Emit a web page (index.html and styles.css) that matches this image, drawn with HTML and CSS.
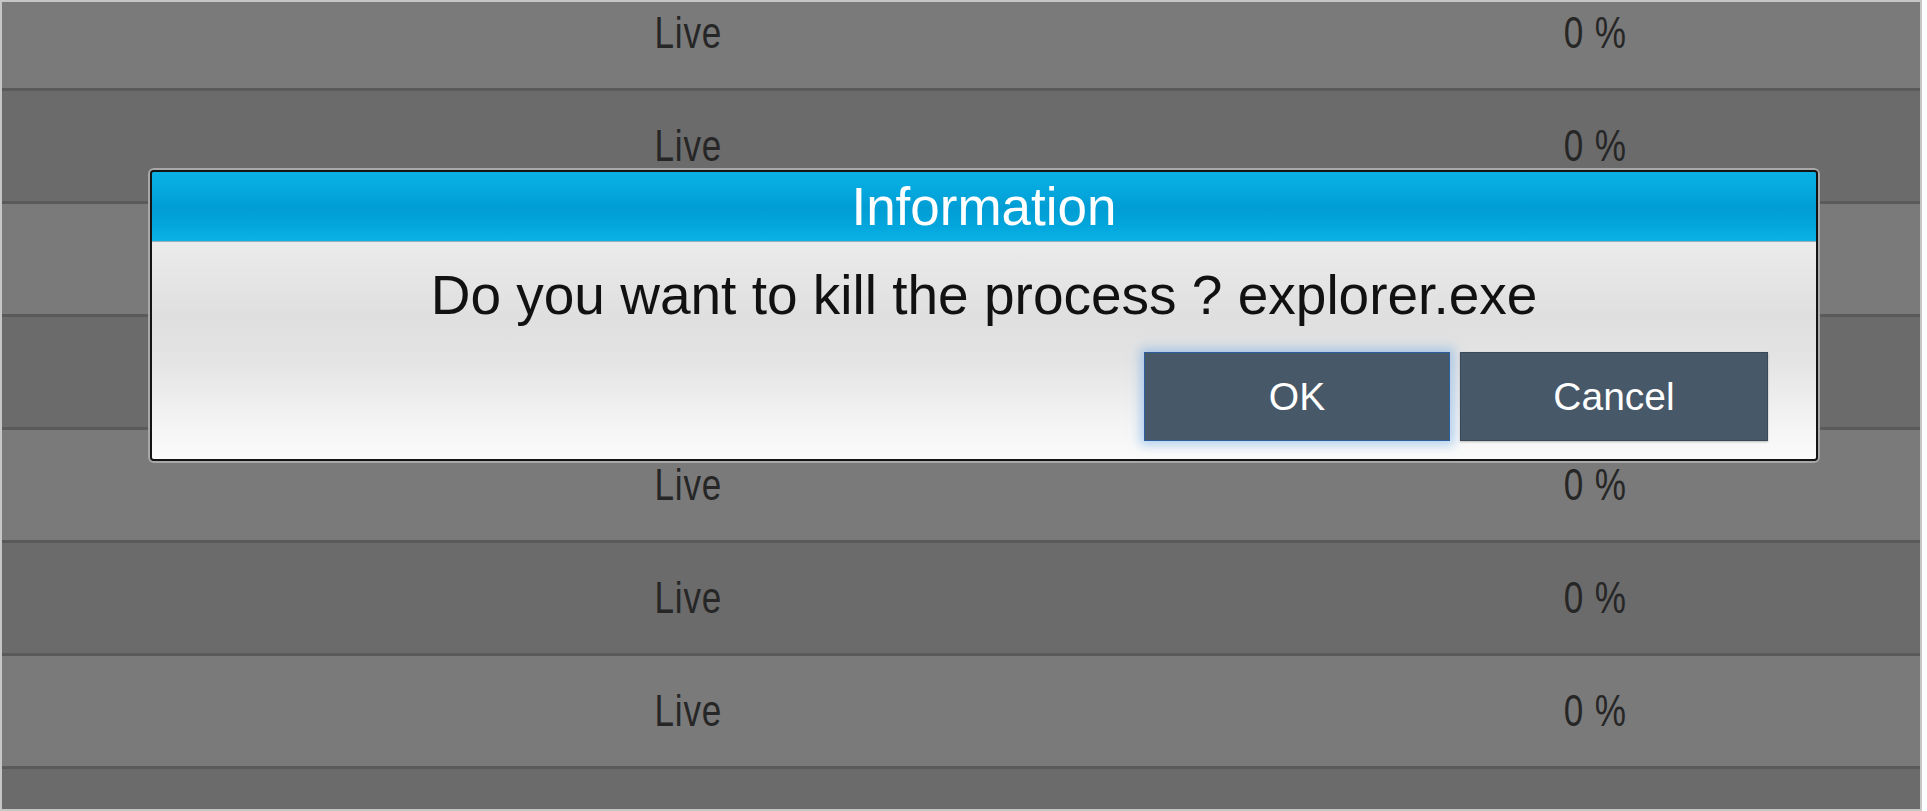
FILE: index.html
```html
<!DOCTYPE html>
<html>
<head>
<meta charset="UTF-8">
<title>Processes</title>
<link rel="stylesheet" href="styles.css">
</head>
<body>
   <div class="process-table">
      <div class="rows">
         <div class="row"><div></div><div class="cell"><span>Live</span></div><div></div><div class="cell"><span>0 %</span></div></div>
         <div class="row"><div></div><div class="cell"><span>Live</span></div><div></div><div class="cell"><span>0 %</span></div></div>
         <!-- these two rows sit under the dialog -->
         <div class="row"><div></div><div class="cell"></div><div></div><div class="cell"></div></div>
         <div class="row"><div></div><div class="cell"></div><div></div><div class="cell"></div></div>
         <div class="row"><div></div><div class="cell"><span>Live</span></div><div></div><div class="cell"><span>0 %</span></div></div>
         <div class="row"><div></div><div class="cell"><span>Live</span></div><div></div><div class="cell"><span>0 %</span></div></div>
         <div class="row"><div></div><div class="cell"><span>Live</span></div><div></div><div class="cell"><span>0 %</span></div></div>
         <div class="row"><div></div><div class="cell"></div><div></div><div class="cell"></div></div>
      </div>
   </div>

   <div class="dialog">
      <div class="dialog-title">Information</div>
      <div class="dialog-body">
         <p class="dialog-message">Do you want to kill the process ? explorer.exe</p>
         <div class="dialog-buttons">
            <button class="btn btn-ok">OK</button>
            <button class="btn">Cancel</button>
         </div>
      </div>
   </div>
</body>
</html>
```
FILE: styles.css
```css
body {
  margin: 0;
  padding: 0;
  background-color: #fff;
  font-family: "Liberation Sans", Arial, sans-serif;
  position: relative;
  width: 1927px;
  height: 811px;
  overflow: hidden;
}

/* table behind the dialog, scrolled a little */
.process-table {
  width: 1922px;
  height: 811px;
  box-sizing: border-box;
  border: 2px solid #c6c6c6;
  overflow: hidden;
  background-color: #6b6b6b;
}
.rows {
  margin-top: -24px;
}
.row {
  display: grid;
  grid-template-columns: 398px 576px 294px 1fr;
  height: 110px;
  border-bottom: 3px solid #5a5a5a;
  background-color: #7a7a7a;
}
.row:nth-child(even) {
  background-color: #6b6b6b;
}
.row .cell {
  display: flex;
  align-items: center;
  justify-content: center;
}
.row .cell span {
  display: inline-block;
  font-size: 45px;
  color: #262626;
  transform: scaleX(0.78);
  letter-spacing: 1px;
}

/* dialog */
.dialog {
  position: absolute;
  left: 150px;
  top: 170px;
  width: 1664px;
  height: 287px;
  border: 2px solid #141414;
  border-radius: 4px;
  box-shadow: 0 0 0 2px #a8a8a8;
  display: flex;
  flex-direction: column;
  overflow: hidden;
}
.dialog-title {
  height: 69px;
  line-height: 69px;
  border-bottom: 1px solid #9cb0ba;
  background: linear-gradient(to bottom, #0ab1e5 0%, #04a7dd 30%, #009dd4 52%, #03a6dc 78%, #0ab2e6 100%);
  color: #fff;
  font-size: 53px;
  text-align: center;
}
.dialog-body {
  flex: 1;
  background: linear-gradient(to bottom, #ebebeb 0%, #dfdfdf 35%, #e4e4e4 55%, #f3f3f3 82%, #fbfbfb 100%);
  display: flex;
  flex-direction: column;
}
.dialog-message {
  margin: 26px 0 0 0;
  font-size: 55px;
  line-height: 55px;
  color: #111;
  text-align: center;
}
.dialog-buttons {
  display: flex;
  justify-content: flex-end;
  gap: 10px;
  margin-top: 29px;
  padding-right: 48px;
}
.btn {
  width: 308px;
  height: 89px;
  border: 1px solid #3b4857;
  background-color: #475869;
  color: #fff;
  font-family: "Liberation Sans", Arial, sans-serif;
  font-size: 39px;
  padding: 0;
  box-shadow: 0 1px 2px rgba(0, 0, 0, 0.25);
}
.btn-ok {
  width: 306px;
  border-color: #2c5f9c;
  box-shadow: 0 0 10px 4px rgba(120, 175, 230, 0.55);
}
```
